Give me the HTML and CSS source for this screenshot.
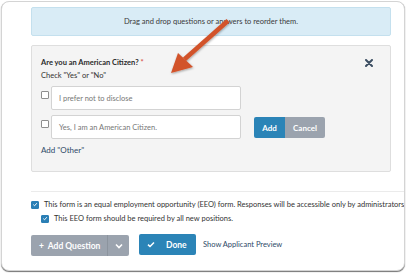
FILE: index.html
```html
<!DOCTYPE html>
<html lang="en">
  <head>
    <meta charset="UTF-8" />
    <meta name="viewport" content="width=device-width, initial-scale=1.0" />
    <title>EEO Form</title>
    <link rel="stylesheet" href="styles.css">
  </head>
  <body>
    <div class="panel">
      <div class="info">Drag and drop questions or answers to reorder them.</div>

      <div class="question-card">
        <div class="question-head">
          <div>
            <p class="question-title">Are you an American Citizen? <span class="req">*</span></p>
            <p class="question-hint">Check "Yes" or "No"</p>
          </div>
          <svg class="close" width="8" height="8" viewBox="0 0 8 8">
            <path d="M1 1 L7 7 M7 1 L1 7" stroke="#3d4f63" stroke-width="2" stroke-linecap="round" />
          </svg>
        </div>

        <div class="option">
          <span class="box"></span>
          <div class="field">I prefer not to disclose</div>
        </div>
        <div class="option">
          <span class="box"></span>
          <div class="field">Yes, I am an American Citizen.</div>
          <div class="btn-group">
            <span class="btn btn-add">Add</span>
            <span class="btn btn-cancel">Cancel</span>
          </div>
        </div>

        <a class="add-other">Add "Other"</a>
      </div>

      <div class="divider"></div>

      <div class="check-row">
        <span class="box checked">
          <svg width="7" height="7" viewBox="0 0 7 7"><path d="M1.5 3.6 L3 5 L5.6 2" fill="none" stroke="#fff" stroke-width="1.1" /></svg>
        </span>
        <span>This form is an equal employment opportunity (EEO) form. Responses will be accessible only by administrators and hiring managers.</span>
      </div>
      <div class="check-row sub">
        <span class="box checked">
          <svg width="7" height="7" viewBox="0 0 7 7"><path d="M1.5 3.6 L3 5 L5.6 2" fill="none" stroke="#fff" stroke-width="1.1" /></svg>
        </span>
        <span>This EEO form should be required by all new positions.</span>
      </div>

      <div class="actions">
        <div class="split">
          <span class="split-main">+&nbsp; Add Question</span>
          <span class="split-caret">
            <svg width="8" height="6" viewBox="0 0 8 6"><path d="M1 1.5 L4 4.5 L7 1.5" fill="none" stroke="#fff" stroke-width="1.6" /></svg>
          </span>
        </div>
        <span class="btn-done">
          <svg width="8" height="7" viewBox="0 0 8 7"><path d="M1 3.6 L3 5.5 L7 1.5" fill="none" stroke="#fff" stroke-width="1.5" /></svg>
          Done
        </span>
        <a class="preview">Show Applicant Preview</a>
      </div>

      <svg class="arrow" width="407" height="274" viewBox="0 0 407 274">
        <defs>
          <filter id="sh" x="-20%" y="-20%" width="140%" height="140%">
            <feDropShadow dx="0.5" dy="1" stdDeviation="1" flood-color="#000" flood-opacity="0.35" />
          </filter>
        </defs>
        <g filter="url(#sh)" fill="#d2532b">
          <path d="M226.5 19 L229.5 22.5 L186 61 L183 57.5 Z" />
          <path d="M171 73 L178 53 L193 67 Z" />
        </g>
      </svg>
    </div>
  </body>
</html>
```

FILE: styles.css
```css
* {
  margin: 0;
  padding: 0;
  box-sizing: border-box;
}

body {
  background: #fff;
  font-family: Lato, "Open Sans", Arial, sans-serif;
  font-size: 7.5px;
  color: #333;
  width: 407px;
  height: 274px;
  overflow: hidden;
}

.panel {
  position: relative;
  margin: 1px 0 0 1px;
  width: 404px;
  height: 270px;
  background: #fff;
  border: 1px solid #d4d4d4;
  border-radius: 8px;
  box-shadow: 0 1px 1px rgba(0, 0, 0, 0.55);
  overflow: hidden;
  padding: 5px 0 0 29px;
}

.info {
  width: 360px;
  height: 29px;
  background: #d9ecf6;
  border: 1px solid #c4e0ee;
  border-radius: 2px;
  display: flex;
  align-items: center;
  justify-content: center;
  color: #3a3a3a;
}

.question-card {
  margin-top: 9px;
  width: 360px;
  height: 127px;
  background: #f4f4f4;
  border: 1px solid #dedede;
  border-radius: 2px;
  padding: 11px 0 0 9px;
}

.question-head {
  display: flex;
  justify-content: space-between;
  align-items: flex-start;
  padding-right: 17px;
  height: 29px;
}

.question-title {
  font-weight: bold;
  color: #2b2b2b;
  line-height: 11px;
}

.req {
  color: #d9534f;
}

.question-hint {
  margin-top: 2px;
  line-height: 11px;
  color: #333;
}

.close {
  margin-top: 2px;
}

.option {
  display: flex;
  align-items: flex-start;
  margin-bottom: 5px;
}

.box {
  width: 8px;
  height: 8px;
  border: 1px solid #8e8e8e;
  border-radius: 1px;
  background: #fff;
  margin-top: 5px;
  margin-right: 2px;
  flex: none;
  display: flex;
  align-items: center;
  justify-content: center;
}

.field {
  width: 190px;
  height: 24px;
  background: #fff;
  border: 1px solid #d3d3d3;
  border-radius: 2px;
  padding-left: 7px;
  display: flex;
  align-items: center;
  color: #777;
}

.btn-group {
  display: flex;
  margin: 2px 0 0 13px;
  height: 21px;
}

.btn {
  display: flex;
  align-items: center;
  justify-content: center;
  color: #fff;
  font-weight: bold;
  font-size: 8px;
}

.btn-add {
  width: 31px;
  background: #2b84b7;
  border-radius: 2px 0 0 2px;
}

.btn-cancel {
  width: 40px;
  background: #9ba3ae;
  border-radius: 0 2px 2px 0;
}

.add-other {
  display: block;
  margin-top: 6px;
  color: #2e4a68;
  font-size: 8px;
  line-height: 11px;
}

.divider {
  margin-top: 19px;
  height: 1px;
  background: #ebebeb;
}

.check-row {
  display: flex;
  align-items: center;
  white-space: nowrap;
  margin-top: 8px;
  height: 9px;
  color: #333;
}

.check-row.sub {
  margin-top: 5px;
  padding-left: 10px;
}

.check-row .box {
  margin: 0 5px 0 0;
}

.box.checked {
  background: #2b7fb5;
  border-color: #2b7fb5;
}

.actions {
  display: flex;
  align-items: center;
  margin-top: 12px;
}

.split {
  display: flex;
  width: 98px;
  height: 21px;
  background: #9ba3ae;
  border-radius: 2px;
  color: #fff;
  font-weight: bold;
  font-size: 8.5px;
}

.split-main {
  width: 77px;
  display: flex;
  align-items: center;
  padding-left: 8px;
  border-right: 1px solid #8c949e;
}

.split-caret {
  flex: 1;
  display: flex;
  align-items: center;
  justify-content: center;
}

.btn-done {
  margin-left: 10px;
  width: 57px;
  height: 21px;
  margin-top: -2px;
  background: #2b84b7;
  border-radius: 2px;
  color: #fff;
  font-weight: bold;
  font-size: 8.5px;
  display: flex;
  align-items: center;
  gap: 11px;
  padding-left: 8px;
}

.preview {
  margin-left: 7px;
  margin-top: -2px;
  color: #2e4a68;
  font-size: 7.5px;
}

.arrow {
  position: absolute;
  left: -2px;
  top: -2px;
  pointer-events: none;
}
```
